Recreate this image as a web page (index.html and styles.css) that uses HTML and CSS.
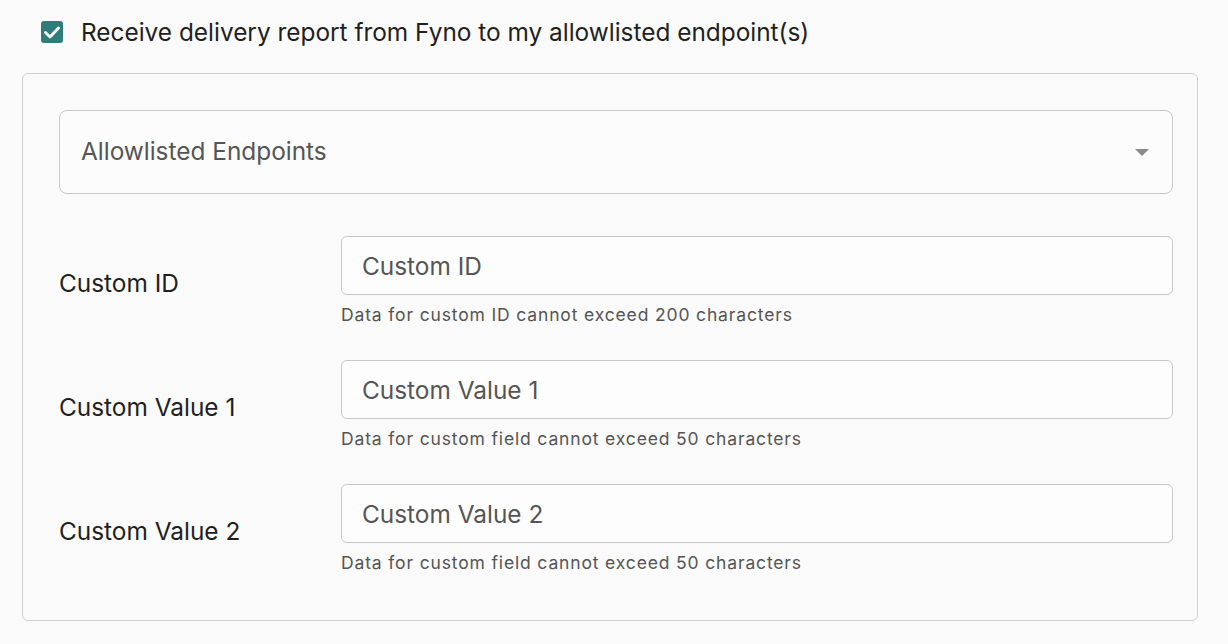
FILE: index.html
```html
<!DOCTYPE html>
<html>
<head>
<meta charset="utf-8">
<link rel="stylesheet" href="styles.css">
</head>
<body>
<div class="page">
  <label class="check-row">
    <span class="checkbox">
      <svg viewBox="0 0 22 22" width="22" height="22"><path d="M4.5 11.5l4.5 4.5 8.5-9" fill="none" stroke="#fff" stroke-width="2.8" stroke-linecap="round" stroke-linejoin="round"/></svg>
    </span>
    <span class="check-text">Receive delivery report from Fyno to my allowlisted endpoint(s)</span>
  </label>
  <div class="card">
    <div class="select">
      <span class="select-text">Allowlisted Endpoints</span>
      <span class="caret"></span>
    </div>
    <div class="rows">
      <div class="row">
        <div class="label">Custom ID</div>
        <div class="field">
          <div class="input">Custom ID</div>
          <div class="helper">Data for custom ID cannot exceed 200 characters</div>
        </div>
      </div>
      <div class="row">
        <div class="label">Custom Value 1</div>
        <div class="field">
          <div class="input">Custom Value 1</div>
          <div class="helper">Data for custom field cannot exceed 50 characters</div>
        </div>
      </div>
      <div class="row">
        <div class="label">Custom Value 2</div>
        <div class="field">
          <div class="input">Custom Value 2</div>
          <div class="helper">Data for custom field cannot exceed 50 characters</div>
        </div>
      </div>
    </div>
  </div>
</div>
</body>
</html>
```
FILE: styles.css
```css
* { box-sizing: border-box; }
html, body { margin: 0; padding: 0; background: #fafafa; }
body { font-family: Inter, "Noto Sans", sans-serif; color: #1c1c1c; }
.page { padding: 21px 30px 0 22px; width: 1228px; }
.check-row { display: flex; align-items: center; gap: 18px; padding-left: 19px; height: 22px; }
.checkbox { width: 22px; height: 22px; border-radius: 3px; background: #2f7d7a; display: flex; align-items: center; justify-content: center; }
.check-text { font-size: 24.4px; color: #1f1f1f; }
.card { margin-top: 30px; width: 1176px; border: 1px solid #cfcfcf; border-radius: 6px; padding: 36px 24px 46px 36px; }
.select { height: 84px; border: 1px solid #c8c8c8; border-radius: 8px; background: #fcfcfc; display: flex; align-items: center; justify-content: space-between; padding: 0 23px 0 21px; }
.select-text { font-size: 24.4px; color: #555; margin-top: -2px; }
.caret { width: 0; height: 0; border-left: 7px solid transparent; border-right: 7px solid transparent; border-top: 7px solid #8a8a8a; }
.rows { margin-top: 42px; display: flex; flex-direction: column; gap: 34px; }
.row { display: grid; grid-template-columns: 282px 1fr; align-items: center; }
.label { font-size: 24.4px; color: #1f1f1f; padding: 3px 0 0 0; }
.input { height: 59px; border: 1px solid #c8c8c8; border-radius: 6px; background: #fdfdfd; display: flex; align-items: center; padding-left: 20px; font-size: 24.4px; color: #555; }
.helper { margin-top: 8px; font-size: 17.5px; line-height: 23px; color: #555; letter-spacing: 0.85px; }
```
